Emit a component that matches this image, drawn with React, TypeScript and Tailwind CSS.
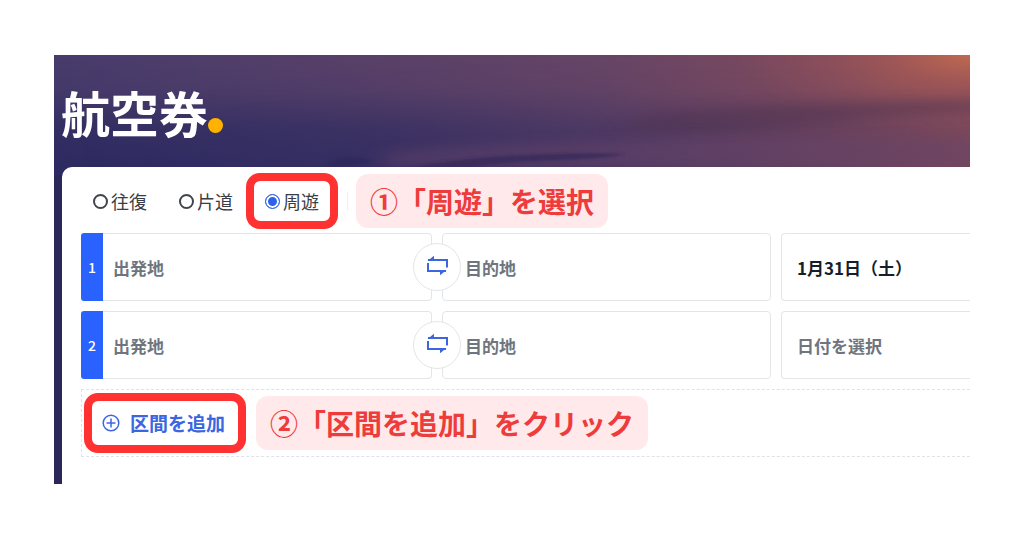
import { useState } from "react";
import type { ReactNode } from "react";

const TRIP_TYPES = ["往復", "片道", "周遊"];

interface Segment {
  id: number;
  date: string;
}

const INITIAL_SEGMENTS: Segment[] = [
  { id: 1, date: "1月31日（土）" },
  { id: 2, date: "" },
];

function SunsetSky() {
  return (
    <svg
      className="absolute inset-0 w-full h-full"
      viewBox="0 0 916 429"
      preserveAspectRatio="none"
      aria-hidden="true"
    >
      <defs>
        <linearGradient id="sky" x1="0" y1="0" x2="1" y2="0">
          <stop offset="0" stopColor="#483c6c" />
          <stop offset="0.3" stopColor="#574069" />
          <stop offset="0.6" stopColor="#674566" />
          <stop offset="0.8" stopColor="#7d4a5e" />
          <stop offset="1" stopColor="#8c4f5a" />
        </linearGradient>
        <linearGradient id="dusk" x1="0" y1="0" x2="0" y2="112" gradientUnits="userSpaceOnUse">
          <stop offset="0" stopColor="#2c2a60" stopOpacity="0" />
          <stop offset="0.3" stopColor="#2c2a60" stopOpacity="0.15" />
          <stop offset="0.65" stopColor="#2c2a60" stopOpacity="0.75" />
          <stop offset="1" stopColor="#2a2860" stopOpacity="0.9" />
        </linearGradient>
        <linearGradient id="fade" x1="0" y1="0" x2="1" y2="0">
          <stop offset="0" stopColor="#fff" />
          <stop offset="0.35" stopColor="#fff" stopOpacity="0.85" />
          <stop offset="0.65" stopColor="#fff" stopOpacity="0.5" />
          <stop offset="1" stopColor="#fff" stopOpacity="0.25" />
        </linearGradient>
        <mask id="duskMask">
          <rect width="916" height="429" fill="url(#fade)" />
        </mask>
        <radialGradient id="sun" cx="916" cy="0" r="230" gradientUnits="userSpaceOnUse" gradientTransform="scale(1 0.35)">
          <stop offset="0" stopColor="#c06a50" />
          <stop offset="0.35" stopColor="#a85a54" stopOpacity="0.7" />
          <stop offset="1" stopColor="#8a4d5c" stopOpacity="0" />
        </radialGradient>
        <filter id="soft" x="-20%" y="-100%" width="140%" height="300%">
          <feGaussianBlur stdDeviation="12 6" />
        </filter>
        <filter id="edge" x="-10%" y="-50%" width="120%" height="200%">
          <feGaussianBlur stdDeviation="1.5" />
        </filter>
      </defs>
      <rect width="916" height="429" fill="url(#sky)" />
      <rect width="916" height="429" fill="url(#dusk)" mask="url(#duskMask)" />
      <rect width="916" height="120" fill="url(#sun)" />
      <path d="M600 58Q700 48 950 44V56Q800 62 740 72Q660 80 560 76Z" fill="#4b3050" opacity="0.45" filter="url(#soft)" />
      <path d="M330 98Q420 88 600 86Q760 78 950 88V112H330Z" fill="#67456a" opacity="0.45" filter="url(#soft)" />
      <path d="M350 114Q410 102 470 100Q530 97 571 99Q560 103 490 106Q440 108 410 114Z" fill="#38295a" opacity="0.85" filter="url(#edge)" />
      <path d="M280 106Q300 98 320 107L290 112H270Z" fill="#292658" opacity="0.6" filter="url(#edge)" />
      <rect y="120" width="12" height="309" fill="#29254f" opacity="0.5" />
    </svg>
  );
}

function SwapIcon() {
  return (
    <svg className="w-6 h-6" viewBox="0 0 24 24" fill="none" stroke="currentColor" strokeWidth={2} aria-hidden="true">
      <path d="M3 5H22V12.5" />
      <path d="M21 16H3V8" />
      <path d="M2.5 6L9 0.8V6Z" fill="currentColor" stroke="none" />
      <path d="M21.5 15L15 20.2V15Z" fill="currentColor" stroke="none" />
    </svg>
  );
}

function PlusCircleIcon() {
  return (
    <svg className="w-[18px] h-[18px]" viewBox="0 0 18 18" fill="none" stroke="currentColor" strokeWidth={1.5} aria-hidden="true">
      <circle cx="9" cy="9" r="7.8" />
      <path d="M9 4.5V13.5M4.5 9H13.5" />
    </svg>
  );
}

function Callout({ children }: { children: ReactNode }) {
  return (
    <p className="h-[54px] px-3.5 rounded-xl bg-[#ffe9ea] text-[28px] leading-[54px] font-bold text-[#ee3b3b] whitespace-nowrap">
      {children}
    </p>
  );
}

function SegmentRow({ segment }: { segment: Segment }) {
  const field =
    "w-full h-full min-w-0 border border-[#e3e6e8] bg-white text-[17px] font-bold text-[#161e2b] placeholder:text-[#6f757e] placeholder:opacity-100 outline-none";

  return (
    <div className="grid grid-cols-[351fr_329fr_189fr] gap-2.5 h-[68px]">
      <div className="relative flex">
        <span className="w-[22px] shrink-0 flex items-center justify-center rounded-l-[3px] bg-[#2962ff] text-sm font-medium text-white">
          {segment.id}
        </span>
        <input
          type="text"
          aria-label={`区間${segment.id} 出発地`}
          placeholder="出発地"
          className={`${field} border-l-0 rounded-r-[4px] pl-2.5`}
        />
        <button
          type="button"
          aria-label="出発地と目的地を入れ替える"
          className="absolute z-10 -right-[29px] top-2.5 w-12 h-12 flex items-center justify-center rounded-full border border-[#e3e6e8] bg-white text-[#3b66e0]"
        >
          <SwapIcon />
        </button>
      </div>
      <input
        type="text"
        aria-label={`区間${segment.id} 目的地`}
        placeholder="目的地"
        className={`${field} rounded-[4px] pl-[22px]`}
      />
      <input
        type="text"
        aria-label={`区間${segment.id} 日付`}
        placeholder="日付を選択"
        defaultValue={segment.date}
        className={`${field} border-r-0 rounded-l-[4px] pl-[15px]`}
      />
    </div>
  );
}

export default function App() {
  const [tripType, setTripType] = useState("周遊");
  const [segments, setSegments] = useState(INITIAL_SEGMENTS);

  const handleAdd = () => {
    setSegments([...segments, { id: segments.length + 1, date: "" }]);
  };

  return (
    <div className="min-h-screen bg-white px-[54px] py-[55px] font-['Noto_Sans_CJK_JP',sans-serif]">
      <main className="relative overflow-hidden bg-[#2d2a5c]">
        <SunsetSky />

        {/* Title */}
        <header className="relative h-28 pl-[7px] flex items-center">
          <h1 className="text-[49px] leading-none font-bold text-white">航空券</h1>
          <span className="w-[15px] h-[15px] mt-7 rounded-full bg-[#ffb300]" />
        </header>

        {/* Search card */}
        <section className="relative ml-2 pl-[19px] pb-[27px] bg-white rounded-tl-[10px]">
          <div className="h-[66px] pl-3 pt-0.5 flex items-center">
            <div role="radiogroup" aria-label="旅程タイプ" className="flex items-center gap-8">
              {TRIP_TYPES.map((type) => (
                <label key={type} className="relative flex items-center gap-[3px] text-lg leading-6 text-[#3a3d45]">
                  <input
                    type="radio"
                    name="tripType"
                    checked={tripType === type}
                    onChange={() => setTripType(type)}
                    className="appearance-none w-[15px] h-[15px] rounded-full border-2 border-[#42454d] bg-white checked:border checked:border-[#2f62ea] checked:bg-[#2f62ea] checked:shadow-[inset_0_0_0_2px_#fff]"
                  />
                  {type}
                  {type === "周遊" && (
                    <span className="absolute -inset-x-[19px] -inset-y-4 rounded-[14px] border-8 border-[#ff3131] pointer-events-none" />
                  )}
                </label>
              ))}
            </div>
            <span className="w-px h-[18px] ml-7 mr-2 bg-[#eeeff0]" />
            <Callout>①「周遊」を選択</Callout>
          </div>

          <div className="flex flex-col gap-2.5">
            {segments.map((segment) => (
              <SegmentRow key={segment.id} segment={segment} />
            ))}

            {/* Add segment */}
            <div className="h-[68px] pl-0.5 flex items-center gap-2.5 border border-r-0 border-dashed border-[#dfe3e5]">
              <button
                type="button"
                onClick={handleAdd}
                className="h-[60px] w-[162px] pl-2.5 flex items-center gap-2.5 rounded-[14px] border-8 border-[#ff3131] text-[19px] font-bold text-[#3b66e0] whitespace-nowrap"
              >
                <PlusCircleIcon />
                区間を追加
              </button>
              <Callout>②「区間を追加」をクリック</Callout>
            </div>
          </div>
        </section>
      </main>
    </div>
  );
}
